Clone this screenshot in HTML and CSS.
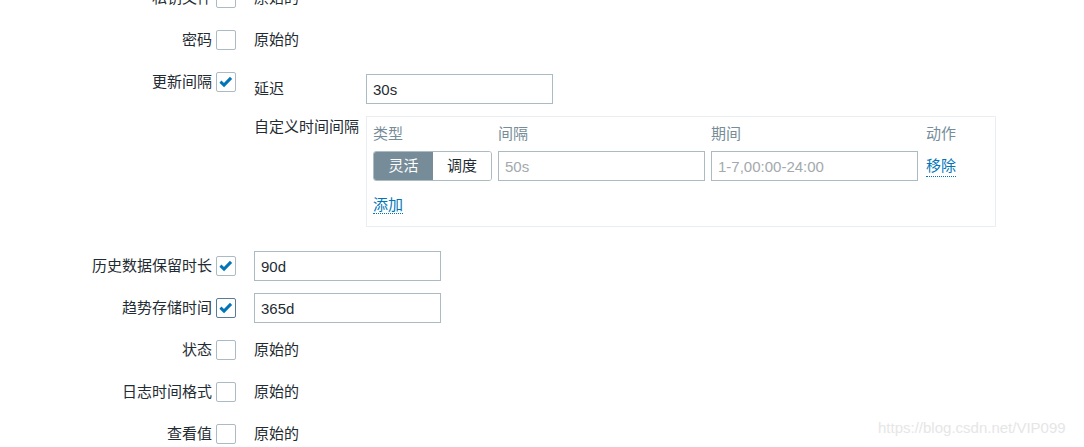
FILE: index.html
```html
<!DOCTYPE html>
<html lang="zh">
<head>
<meta charset="utf-8">
<title>Form</title>
<link rel="stylesheet" href="styles.css">
</head>
<body>
<ul class="form">
  <li class="row">
    <div class="lbl">私钥文件</div>
    <span class="cb"></span>
    <div class="val">原始的</div>
  </li>
  <li class="row">
    <div class="lbl">密码</div>
    <span class="cb"></span>
    <div class="val">原始的</div>
  </li>
  <li class="row">
    <div class="lbl">更新间隔</div>
    <span class="cb"><svg viewBox="0 0 20 20" width="18" height="18"><path d="M3.8 9.6 L7.8 13.4 L15.6 5.4" fill="none" stroke="#0275b8" stroke-width="3.3"/></svg></span>
    <div class="val">
      <div class="sub">
        <div class="subrow">
          <div class="sublbl">延迟</div>
          <input class="input" type="text" value="30s">
        </div>
        <div class="subrow">
          <div class="sublbl tall">自定义时间间隔</div>
          <div class="box">
            <div class="grid">
              <div class="th">类型</div>
              <div class="th">间隔</div>
              <div class="th">期间</div>
              <div class="th">动作</div>
              <div class="seg"><span class="seg-btn active">灵活</span><span class="seg-btn">调度</span></div>
              <div><input class="input wide" type="text" placeholder="50s"></div>
              <div><input class="input wide" type="text" placeholder="1-7,00:00-24:00"></div>
              <div class="act"><span class="link">移除</span></div>
            </div>
            <div class="add"><span class="link">添加</span></div>
          </div>
        </div>
      </div>
    </div>
  </li>
  <li class="row">
    <div class="lbl">历史数据保留时长</div>
    <span class="cb"><svg viewBox="0 0 20 20" width="18" height="18"><path d="M3.8 9.6 L7.8 13.4 L15.6 5.4" fill="none" stroke="#0275b8" stroke-width="3.3"/></svg></span>
    <div class="val"><input class="input" type="text" value="90d"></div>
  </li>
  <li class="row">
    <div class="lbl">趋势存储时间</div>
    <span class="cb focus"><svg viewBox="0 0 20 20" width="18" height="18"><path d="M3.8 9.6 L7.8 13.4 L15.6 5.4" fill="none" stroke="#0275b8" stroke-width="3.3"/></svg></span>
    <div class="val"><input class="input" type="text" value="365d"></div>
  </li>
  <li class="row">
    <div class="lbl">状态</div>
    <span class="cb"></span>
    <div class="val">原始的</div>
  </li>
  <li class="row">
    <div class="lbl">日志时间格式</div>
    <span class="cb"></span>
    <div class="val">原始的</div>
  </li>
  <li class="row">
    <div class="lbl">查看值</div>
    <span class="cb"></span>
    <div class="val">原始的</div>
  </li>
</ul>
<div class="watermark">https://blog.csdn.net/VIP099</div>
</body>
</html>
```
FILE: styles.css
```css
html, body {
  margin: 0;
  padding: 0;
  overflow: hidden;
  background: #ffffff;
}

body {
  position: relative;
  width: 1084px;
  height: 447px;
  font-family: "Liberation Sans", Arial, "Noto Sans CJK SC", sans-serif;
  font-size: 15px;
  color: #1f2c33;
}

.form {
  list-style: none;
  margin: -23px 0 0 0;
  padding: 0;
}

.row {
  display: flex;
  align-items: flex-start;
  padding: 6px 0;
}

.lbl {
  width: 212px;
  flex-shrink: 0;
  text-align: right;
  line-height: 30px;
  white-space: nowrap;
}

.cb {
  box-sizing: border-box;
  width: 20px;
  height: 20px;
  margin: 5px 0 0 4px;
  flex-shrink: 0;
  border: 1px solid #acbbc2;
  border-radius: 2px;
  background: #fff;
  display: flex;
  align-items: center;
  justify-content: center;
}

.cb.focus {
  border-color: #5a7a96;
}

.cb svg {
  display: block;
}

.val {
  margin-left: 18px;
  line-height: 30px;
}

.sub {
  padding-top: 7px;
}

.subrow {
  display: flex;
  align-items: flex-start;
  margin-bottom: 12px;
}

.sublbl {
  width: 112px;
  flex-shrink: 0;
  line-height: 30px;
  white-space: nowrap;
}

.sublbl.tall {
  line-height: 22px;
}

.input {
  box-sizing: border-box;
  width: 187px;
  height: 30px;
  margin: 0;
  padding: 0 6px;
  border: 1px solid #acbbc2;
  border-radius: 0;
  font-family: "Liberation Sans", Arial, "Noto Sans CJK SC", sans-serif;
  font-size: 15px;
  color: #1f2c33;
  background: #fff;
  outline: none;
  display: block;
}

.input::placeholder {
  color: #a3a9ad;
}

.input.wide {
  width: 207px;
}

.box {
  box-sizing: border-box;
  width: 630px;
  border: 1px solid #ebeef0;
  padding: 6px 6px 10px 6px;
  line-height: normal;
}

.grid {
  display: grid;
  grid-template-columns: 125px 213px 215px 1fr;
  row-gap: 6px;
}

.th {
  line-height: 22px;
  color: #768d99;
}

.seg {
  box-sizing: border-box;
  display: flex;
  width: 119px;
  height: 30px;
  border: 1px solid #acbbc2;
  border-radius: 3px;
  overflow: hidden;
}

.seg-btn {
  flex: 1;
  line-height: 28px;
  text-align: center;
  background: #fff;
  color: #1f2c33;
}

.seg-btn.active {
  flex: 0 0 59px;
  background: #768d99;
  color: #fff;
}

.act {
  display: flex;
  align-items: center;
  line-height: 20px;
}

.link {
  color: #0275b8;
  border-bottom: 1px dotted #0275b8;
}

.add {
  margin-top: 13px;
  line-height: 22px;
}

.watermark {
  position: absolute;
  left: 878px;
  top: 419px;
  font-family: "Liberation Sans", Arial, sans-serif;
  font-size: 15px;
  color: #e6e6e6;
  white-space: nowrap;
}
```
